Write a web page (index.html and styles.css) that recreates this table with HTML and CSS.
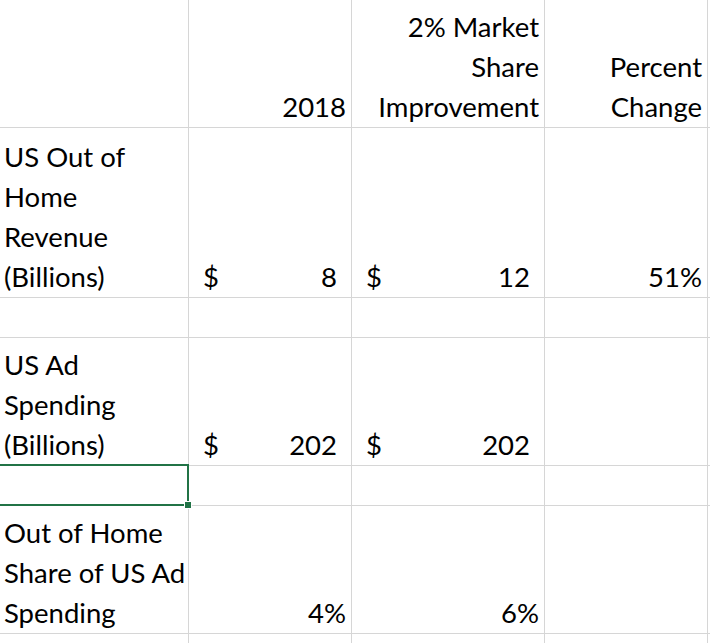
FILE: index.html
```html
<!DOCTYPE html>
<html>
<head>
<meta charset="utf-8">
<link rel="stylesheet" href="styles.css">
</head>
<body>
<div class="sheet">
  <div class="cell"></div>
  <div class="cell r"><span>2018</span></div>
  <div class="cell r"><span>2% Market<br>Share<br>Improvement</span></div>
  <div class="cell r"><span>Percent<br>Change</span></div>
  <div class="cell"></div>

  <div class="cell l"><span>US Out of<br>Home<br>Revenue<br>(Billions)</span></div>
  <div class="cell acct"><span class="cur">$</span><span class="num">8</span></div>
  <div class="cell acct"><span class="cur">$</span><span class="num">12</span></div>
  <div class="cell r"><span>51%</span></div>
  <div class="cell"></div>

  <div class="cell"></div><div class="cell"></div><div class="cell"></div><div class="cell"></div><div class="cell"></div>

  <div class="cell l"><span>US Ad<br>Spending<br>(Billions)</span></div>
  <div class="cell acct"><span class="cur">$</span><span class="num">202</span></div>
  <div class="cell acct"><span class="cur">$</span><span class="num">202</span></div>
  <div class="cell"></div>
  <div class="cell"></div>

  <div class="cell selected"><div class="selection"><div class="handle"></div></div></div>
  <div class="cell"></div><div class="cell"></div><div class="cell"></div><div class="cell"></div>

  <div class="cell l"><span>Out of Home<br>Share of US Ad<br>Spending</span></div>
  <div class="cell r"><span>4%</span></div>
  <div class="cell r"><span>6%</span></div>
  <div class="cell"></div>
  <div class="cell"></div>

  <div class="cell"></div><div class="cell"></div><div class="cell"></div><div class="cell"></div><div class="cell"></div>
</div>
</body>
</html>
```
FILE: styles.css
```css
html, body {
  margin: 0;
  padding: 0;
  background: #ffffff;
}
body {
  width: 710px;
  height: 643px;
  overflow: hidden;
}
.sheet {
  display: grid;
  grid-template-columns: 188px 162px 192px 162px 1fr;
  grid-template-rows: 127px 169px 39px 127px 39px 127px 40px;
  gap: 1px;
  background: #d6d6d6;
  width: 730px;
  font-family: Lato, "Open Sans", sans-serif;
  font-size: 27.5px;
  line-height: 40px;
  color: #000;
}
.cell {
  background: #ffffff;
  display: flex;
  flex-direction: column;
  justify-content: flex-end;
  white-space: nowrap;
}
.l {
  text-align: left;
  padding-left: 4px;
}
.r {
  text-align: right;
  padding-right: 5px;
}
.acct {
  flex-direction: row;
  align-items: flex-end;
  justify-content: space-between;
  padding: 0 14px;
}
.selected {
  position: relative;
}
.selection {
  position: absolute;
  top: -2px;
  left: -3px;
  right: -1px;
  bottom: -1px;
  border: 2px solid #217346;
}
.handle {
  position: absolute;
  right: -5px;
  bottom: -5px;
  width: 6px;
  height: 6px;
  background: #217346;
  border: 1px solid #ffffff;
}
```
